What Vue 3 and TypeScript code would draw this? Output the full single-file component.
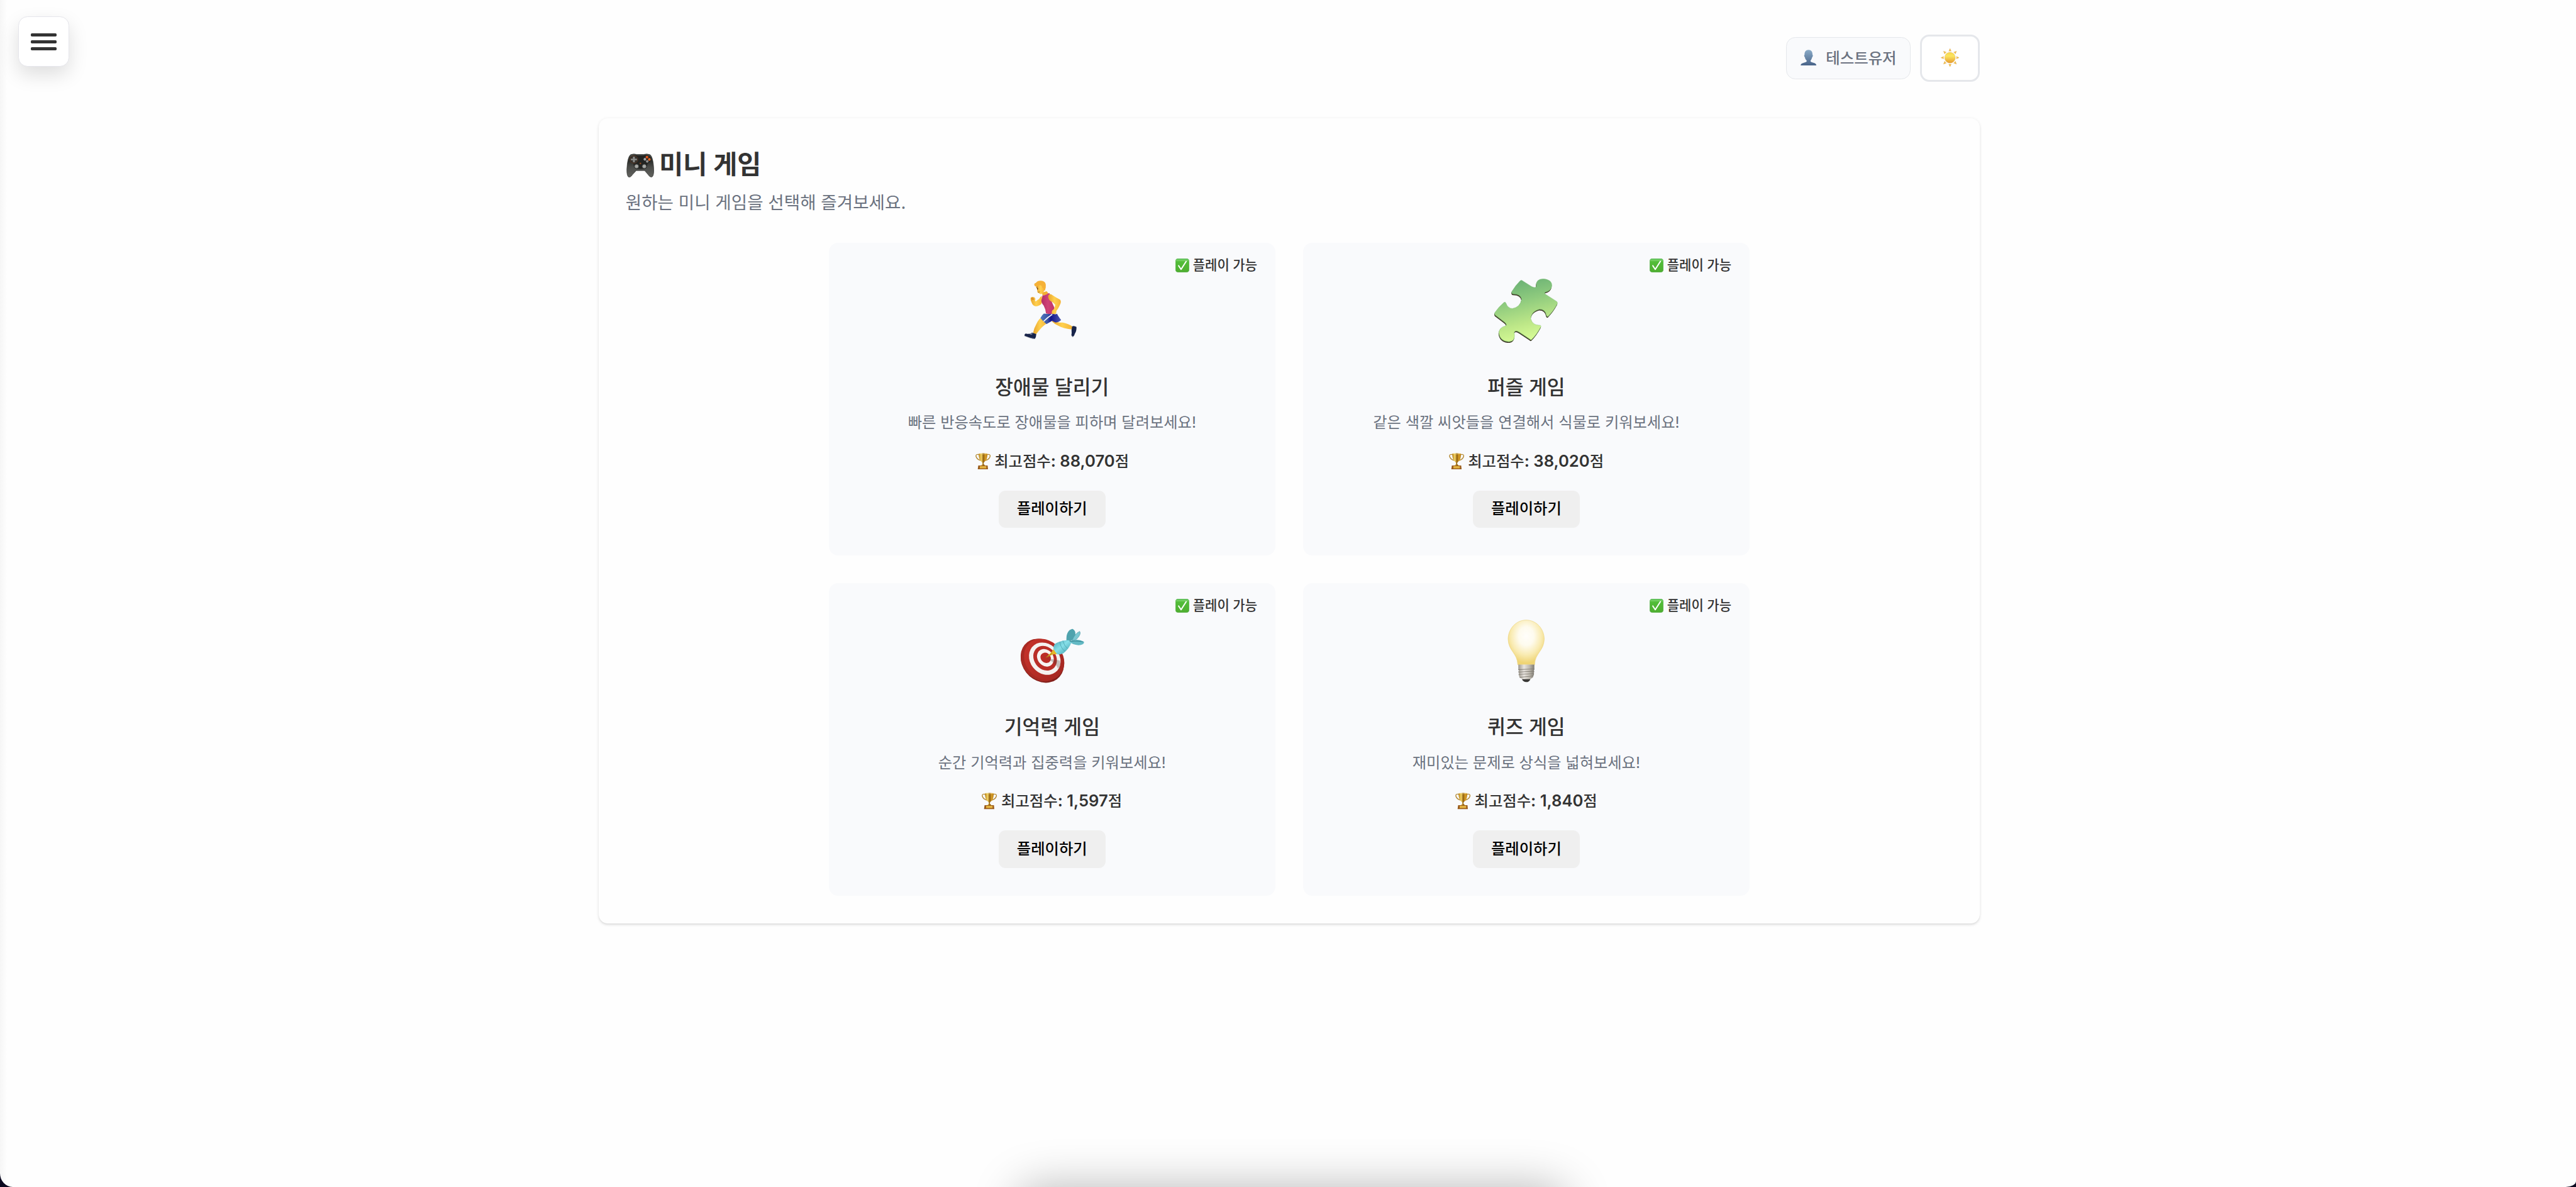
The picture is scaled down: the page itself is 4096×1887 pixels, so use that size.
<script setup lang="ts">
type IconName = 'runner' | 'puzzle' | 'target' | 'bulb'

interface Game {
  icon: IconName
  title: string
  description: string
  best: number
}

const games: Game[] = [
  { icon: 'runner', title: '장애물 달리기', description: '빠른 반응속도로 장애물을 피하며 달려보세요!', best: 88070 },
  { icon: 'puzzle', title: '퍼즐 게임', description: '같은 색깔 씨앗들을 연결해서 식물로 키워보세요!', best: 38020 },
  { icon: 'target', title: '기억력 게임', description: '순간 기억력과 집중력을 키워보세요!', best: 1597 },
  { icon: 'bulb', title: '퀴즈 게임', description: '재미있는 문제로 상식을 넓혀보세요!', best: 1840 },
]

const rays = [0, 45, 90, 135, 180, 225, 270, 315]

const formatScore = (value: number): string => value.toLocaleString('en-US')
</script>

<template>
  <div class="window">
    <div class="page">
      <button class="menu" aria-label="menu">
        <span class="bar"></span>
        <span class="bar"></span>
        <span class="bar"></span>
      </button>

      <header class="header">
        <div class="user">
          <svg class="user-icon" viewBox="267 167 85 86">
            <defs>
              <linearGradient id="person" x1="0" y1="0" x2="0" y2="1">
                <stop offset="0" stop-color="#8aabc8" />
                <stop offset="1" stop-color="#486388" />
              </linearGradient>
            </defs>
            <path fill="url(#person)" d="M309 168C325 168 331 180 330 194Q334 196 331 203Q330 207 328 208C326 217 322 222 320 225V230Q322 234 335 237Q351 241 351 252H267Q267 241 284 237Q297 234 299 230V225C295 221 291 216 290 208Q288 207 287 203Q284 196 288 194C287 180 294 168 309 168Z" />
          </svg>
          <span>테스트유저</span>
        </div>
        <button class="theme" aria-label="theme">
          <svg class="sun" viewBox="-48 -48 96 96">
            <defs>
              <linearGradient id="sun" x1="0" y1="0" x2="0" y2="1">
                <stop offset="0" stop-color="#f7d64a" />
                <stop offset=".35" stop-color="#fbe560" />
                <stop offset="1" stop-color="#e69a2e" />
              </linearGradient>
            </defs>
            <circle r="28" fill="url(#sun)" stroke="#dca045" stroke-width="1" />
            <path v-for="a in rays" :key="a" d="M0 -48L6.5 -33Q0 -36 -6.5 -33Z" fill="#f4bc38" stroke="#d9b27c" stroke-width="1.4" :transform="`rotate(${a})`" />
          </svg>
        </button>
      </header>

      <main class="panel">
        <h1 class="heading">
          <svg class="gamepad" viewBox="166 229 118 125" preserveAspectRatio="none">
            <defs>
              <linearGradient id="pad" x1="0" y1="0" x2="0" y2="1">
                <stop offset="0" stop-color="#4d514d" />
                <stop offset=".3" stop-color="#2b2d2a" />
                <stop offset=".55" stop-color="#4a4b48" />
                <stop offset="1" stop-color="#62635f" />
              </linearGradient>
            </defs>
            <path fill="url(#pad)" stroke="#30312f" stroke-width="2" d="M184 235Q198 229 210 234H240Q253 229 267 235Q280 246 283 310Q284 350 273 352Q265 352 258 338L244 318H208L193 338Q185 352 178 353Q167 350 168 310Q171 246 184 235Z" />
            <path fill="#232422" d="M180 250Q198 232 215 240H237Q255 232 271 250Q272 274 256 282Q254 306 244 309H208Q198 306 196 282Q180 274 180 250Z" />
            <ellipse cx="198" cy="260" rx="17" ry="20" fill="#33302c" stroke="#6b3c20" stroke-width="2" />
            <path d="M194 245h8v11h9v8h-9v11h-8v-11h-9v-8h9z" fill="#8b8c8a" />
            <ellipse cx="254" cy="248" rx="6" ry="7" fill="#e0561c" />
            <ellipse cx="264" cy="260" rx="5.5" ry="7" fill="#f06a24" />
            <ellipse cx="245" cy="259" rx="5.5" ry="7" fill="#a5a5a8" />
            <ellipse cx="255" cy="270" rx="5.5" ry="7" fill="#909090" />
            <ellipse cx="226" cy="281" rx="3.5" ry="4.5" fill="#8e4b22" />
            <ellipse cx="209.500" cy="296" rx="10" ry="12" fill="#8f908d" stroke="#1d1e1c" stroke-width="2.500" />
            <ellipse cx="242.500" cy="296" rx="10" ry="12" fill="#8f908d" stroke="#1d1e1c" stroke-width="2.500" />
            <ellipse cx="209.500" cy="296" rx="5.500" ry="7" fill="#a9aaa7" />
            <ellipse cx="242.500" cy="296" rx="5.500" ry="7" fill="#a9aaa7" />
          </svg>
          <span class="heading-text">미니 게임</span>
        </h1>
        <p class="subtitle">원하는 미니 게임을 선택해 즐겨보세요.</p>

        <section class="grid">
          <article v-for="game in games" :key="game.title" class="card">
            <div class="status">
              <svg class="check" viewBox="0 0 24 24">
                <defs>
                  <linearGradient id="check" x1="0" y1="0" x2="0" y2="1">
                    <stop offset="0" stop-color="#4cc04a" />
                    <stop offset=".12" stop-color="#7ad166" />
                    <stop offset=".22" stop-color="#52bd38" />
                    <stop offset="1" stop-color="#4fae30" />
                  </linearGradient>
                </defs>
                <rect x=".3" y=".3" width="23.4" height="23.4" rx="4.5" fill="url(#check)" stroke="#3f9f36" stroke-width=".6" />
                <path d="M5.600 12.500L9.800 18.800L18.700 5" fill="none" stroke="#fff" stroke-width="2.200" stroke-linecap="round" stroke-linejoin="round" />
              </svg>
              <span>플레이 가능</span>
            </div>

            <div class="icon">
              <svg v-if="game.icon === 'runner'" class="runner" viewBox="90 54 272 306">
                <defs>
                  <linearGradient id="skin" x1="0" y1="0" x2="1" y2="0">
                    <stop offset="0" stop-color="#e9a52c" />
                    <stop offset=".5" stop-color="#ffd04f" />
                    <stop offset="1" stop-color="#f5b437" />
                  </linearGradient>
                  <linearGradient id="shirt" x1="0" y1="0" x2="1" y2="0">
                    <stop offset="0" stop-color="#b32e66" />
                    <stop offset=".5" stop-color="#cf4277" />
                    <stop offset="1" stop-color="#c03468" />
                  </linearGradient>
                  <linearGradient id="shorts" x1="0" y1="0" x2="1" y2="0">
                    <stop offset="0" stop-color="#5079bd" />
                    <stop offset=".35" stop-color="#3c55a5" />
                    <stop offset=".5" stop-color="#15158a" />
                    <stop offset="1" stop-color="#4a57b0" />
                  </linearGradient>
                </defs>
                <path fill="url(#skin)" d="M180 134Q184 160 178 176Q160 190 146 188Q132 184 127 168Q120 156 122 144Q128 136 141 141Q150 148 145 158L148 163Q160 154 166 150Q172 138 180 134Z" />
                <path fill="#d9922a" d="M124 146Q130 140 137 145L141 152Q134 158 128 153Z" />
                <path fill="url(#skin)" d="M240 262Q260 274 290 273Q322 280 341 294L336 309Q290 303 266 289Q246 280 232 266Z" />
                <path fill="url(#skin)" d="M173 250L207 277Q190 288 180 298Q164 316 150 334L135 327Q140 300 152 280Q160 262 173 250Z" />
                <path fill="#f1b034" d="M181 116L206 110L214 120Q202 132 184 131Z" />
                <path fill="url(#skin)" d="M152 84Q160 66 180 66Q196 70 195 92Q194 112 182 122Q172 128 164 119Q156 117 157 108Q154 102 156 98Q150 94 152 84Z" />
                <path fill="#f5b138" d="M141 76Q140 68 149 66Q158 54 176 55Q198 56 201 75Q203 90 196 108Q190 104 188 93Q182 96 181 84Q178 76 168 79Q152 90 144 83Z" />
                <path d="M151 90l8 -2M161 114q6 3 9 -3" stroke="#7b4a18" stroke-width="2.500" fill="none" />
                <ellipse cx="158" cy="97" rx="2.500" ry="4.500" fill="#513017" />
                <path fill="url(#shirt)" d="M184 131Q200 131 213 120L221 120Q226 132 224 142Q232 168 246 196Q244 216 238 227Q218 230 202 225Q200 202 190 184Q178 172 178 158Q182 144 184 131Z" />
                <path fill="url(#skin)" d="M214 132Q222 120 236 130Q254 142 276 154Q283 164 276 178Q266 202 256 212Q258 226 248 230Q238 236 232 227Q230 214 236 208Q246 206 250 180Q238 166 222 158Q212 148 214 132Z" />
                <path fill="url(#shorts)" d="M191 226Q215 230 238 228Q252 232 260 227Q264 238 281 260Q270 272 252 273Q240 268 234 264Q220 272 205 281Q186 266 173 249Q180 234 191 226Z" />
                <path d="M235 230Q212 244 190 267" stroke="#f3f6fb" stroke-width="6" fill="none" />
                <path fill="#18244a" d="M97 330Q116 336 129 325L151 333Q152 350 143 359Q124 356 91 343Q88 332 97 330Z" />
                <path fill="#18244a" d="M338 293Q348 288 361 296Q362 318 352 332Q348 346 341 348Q332 344 336 328Q334 312 338 293Z" />
                <path d="M92 344Q120 355 143 358M335 342Q340 347 344 345" stroke="#d9d3cf" stroke-width="2" fill="none" />
                <path d="M118 332l10 3M123 328l9 4" stroke="#cfd4e2" stroke-width="2.500" />
              </svg>

              <svg v-else-if="game.icon === 'puzzle'" class="puzzle" viewBox="682 204 212 309" preserveAspectRatio="none">
                <defs>
                  <linearGradient id="piece" x1=".35" y1="0" x2=".6" y2="1">
                    <stop offset="0" stop-color="#68b074" />
                    <stop offset=".35" stop-color="#8fcb7e" />
                    <stop offset=".7" stop-color="#bde788" />
                    <stop offset="1" stop-color="#dcff98" />
                  </linearGradient>
                  <path id="piece-shape" d="M768 214Q772 209 777 215L806 242Q818 250 822 242Q818 206 844 205Q874 208 873 238Q871 262 852 268Q846 272 852 279L889 313Q893 318 891 325Q878 360 861 384Q857 388 855 380Q852 350 832 350Q805 360 803 395Q808 426 830 427Q838 426 837 434Q823 472 806 496Q803 499 799 493L765 460Q751 448 748 462Q754 504 731 506Q700 504 697 462Q700 436 720 430Q726 424 716 412L685 378Q682 372 684 366Q696 340 714 318Q719 313 721 322Q727 346 742 347Q768 341 773 303Q770 276 745 277Q739 276 740 266Q752 237 768 214Z" />
                </defs>
                <use href="#piece-shape" fill="#3b2a1f" transform="translate(-1 6)" />
                <use href="#piece-shape" fill="#4d6b3c" transform="translate(-.500 3)" />
                <use href="#piece-shape" fill="url(#piece)" stroke="#7dbd76" stroke-width="1" />
              </svg>

              <svg v-else-if="game.icon === 'target'" class="target" viewBox="674 231 214 240" preserveAspectRatio="none">
                <defs>
                  <linearGradient id="dart" x1="0" y1="0" x2="1" y2="1">
                    <stop offset="0" stop-color="#4aa7b5" />
                    <stop offset=".45" stop-color="#86dfe8" />
                    <stop offset="1" stop-color="#3b98a6" />
                  </linearGradient>
                  <linearGradient id="board" x1="0" y1="0" x2="1" y2="1">
                    <stop offset="0" stop-color="#c9332b" />
                    <stop offset="1" stop-color="#a02620" />
                  </linearGradient>
                </defs>
                <ellipse cx="748" cy="373" rx="70" ry="98" fill="#84201b" transform="rotate(-14 748 373)" />
                <ellipse cx="744" cy="370" rx="66" ry="95" fill="#a92a23" transform="rotate(-14 744 370)" />
                <ellipse cx="754" cy="367" rx="65" ry="92" fill="url(#board)" transform="rotate(-14 754 367)" />
                <ellipse cx="756" cy="364" rx="51" ry="72" fill="#f5f2f0" transform="rotate(-14 756 364)" />
                <ellipse cx="757" cy="362" rx="38" ry="55" fill="#b92e27" transform="rotate(-14 757 362)" />
                <ellipse cx="758" cy="360" rx="27" ry="39" fill="#f7f4f2" transform="rotate(-14 758 360)" />
                <ellipse cx="759" cy="360" rx="17" ry="23" fill="#bb2d27" transform="rotate(-14 759 360)" />
                <path d="M762 362L806 372Q812 392 800 408Q796 386 762 362Z" fill="#5a3a38" opacity=".3" />
                <path d="M759 360L779 334L785 322L797 344L784 345Z" fill="#e3b92c" />
                <path d="M759 361L781 340" stroke="#8a6a12" stroke-width="2" />
                <path d="M828 284Q826 240 848 233Q860 240 857 262Q854 278 842 286Z" fill="#4fa3ae" />
                <path d="M846 286Q856 252 872 244Q878 256 862 278Z" fill="#7cc8d2" stroke="#4a97a3" stroke-width="1.500" />
                <path d="M838 290Q862 272 886 290Q888 302 868 305Q848 303 838 290Z" fill="#63b9c4" />
                <path d="M785 322Q782 300 800 292Q818 282 834 283L844 293Q838 318 818 340Q804 348 797 344Z" fill="url(#dart)" />
                <path d="M806 289Q808 318 824 332M816 285Q820 308 832 320" stroke="#4aa5b2" stroke-width="2" fill="none" />
                <path d="M838 288Q860 284 884 290" stroke="#2f7f8c" stroke-width="2.500" fill="none" />
              </svg>

              <svg v-else class="bulb" viewBox="726 194 124 275" preserveAspectRatio="none">
                <defs>
                  <radialGradient id="glass" cx=".5" cy=".36" r=".6">
                    <stop offset="0" stop-color="#fffefb" />
                    <stop offset=".35" stop-color="#fefbee" />
                    <stop offset=".7" stop-color="#f9ebb2" />
                    <stop offset="1" stop-color="#efd474" />
                  </radialGradient>
                  <linearGradient id="screw" x1="0" y1="0" x2="1" y2="0">
                    <stop offset="0" stop-color="#9c978d" />
                    <stop offset=".35" stop-color="#e9e5df" />
                    <stop offset=".7" stop-color="#bdb8ae" />
                    <stop offset="1" stop-color="#7e7a72" />
                  </linearGradient>
                </defs>
                <path fill="url(#glass)" stroke="#ecd27a" stroke-width="1.500" d="M788 196C822 196 848 235 848 280C846 334 817 340 816 392H760C759 340 730 334 728 280C728 235 754 196 788 196Z" />
                <path fill="url(#screw)" d="M762 391H815V414L813 418L815 422L813 428L814 434L810 448L800 456H776L766 448L763 434L764 428L762 422L764 418L762 414Z" />
                <path d="M762 413L815 410M762 424L814 420M763 435L814 430M766 447L811 441" stroke="#817c73" stroke-width="2.500" />
                <path fill="#3a3836" d="M774 455H802Q798 468 788 468Q778 467 774 455Z" />
              </svg>
            </div>

            <h2 class="title">{{ game.title }}</h2>
            <p class="description">{{ game.description }}</p>
            <div class="score">
              <svg class="trophy" viewBox="75 46 80 87">
                <defs>
                  <linearGradient id="gold" x1="0" y1="0" x2="1" y2="0">
                    <stop offset="0" stop-color="#b27a13" />
                    <stop offset=".3" stop-color="#f6d767" />
                    <stop offset=".55" stop-color="#8d5c0d" />
                    <stop offset=".75" stop-color="#d79d26" />
                    <stop offset="1" stop-color="#b87f18" />
                  </linearGradient>
                </defs>
                <path d="M95 55Q76 50 78 64Q82 80 104 86M135 55Q154 50 152 64Q148 80 126 86" fill="none" stroke="#b58a35" stroke-width="4.500" />
                <path fill="url(#gold)" d="M92 49Q115 46 138 49Q138 84 122 93Q117 97 118 104Q124 108 126 113H104Q106 108 112 104Q113 97 108 93Q92 84 92 49Z" />
                <path fill="#9a5b1c" d="M90 112H139L141 132H87Z" />
                <path fill="#e3b340" d="M98 115H132V127H98Z" />
                <path d="M92 50Q115 54 138 50" stroke="#f3d98a" stroke-width="2" fill="none" />
              </svg>
              <span>최고점수<span class="num">: {{ formatScore(game.best) }}</span>점</span>
            </div>
            <button class="play">플레이하기</button>
          </article>
        </section>
      </main>

      <div class="dock-shadow"></div>
    </div>
  </div>
</template>

<style>
html {
  font-size: 9.151px;
}

body {
  margin: 0;
  overflow: hidden;
}
</style>

<style scoped>
.window {
  height: 1887px;
  background: #0c0920;
  font-family: Inter, 'Noto Sans CJK KR', sans-serif;
  color: #333;
}

.page {
  position: relative;
  box-sizing: border-box;
  height: 100%;
  padding: 6rem 0 0 0.4rem;
  overflow: hidden;
  background: linear-gradient(90deg, #f6f6f6, #fefefe 1.2rem) #fefefe;
  border-radius: 0 0 1.8rem 2.2rem / 0 0 1rem 2.4rem;
}

.menu {
  position: absolute;
  left: 3.2rem;
  top: 2.8rem;
  display: flex;
  flex-direction: column;
  align-items: center;
  justify-content: center;
  gap: 0.7rem;
  box-sizing: border-box;
  width: 8.8rem;
  height: 8.8rem;
  padding: 0.15rem 0 0;
  border: 0.2rem solid #e5e5eb;
  border-radius: 1.6rem;
  background: #fff;
  box-shadow: 0 1.4rem 3.4rem rgba(0, 0, 0, 0.13);
}

.bar {
  width: 4.4rem;
  height: 0.5rem;
  border-radius: 0.2rem;
  background: #333;
}

.header {
  display: flex;
  align-items: center;
  justify-content: flex-end;
  gap: 1.6rem;
  width: 240rem;
  height: 8.2rem;
  margin: 0 auto;
}

.user {
  display: flex;
  align-items: center;
  gap: 1.65rem;
  box-sizing: border-box;
  width: 21.7rem;
  height: 7.3rem;
  padding: 0 0 0 2.4rem;
  border: 0.2rem solid #e5e7eb;
  border-radius: 1.6rem;
  background: #f9fafc;
  color: #6b7280;
  font-size: 2.67rem;
  font-weight: 500;
  line-height: 4rem;
  white-space: nowrap;
}

.user-icon {
  width: 2.8rem;
  height: 2.8rem;
  margin-bottom: 0.2rem;
}

.theme {
  display: flex;
  align-items: center;
  justify-content: center;
  box-sizing: border-box;
  width: 10.4rem;
  height: 8.2rem;
  padding: 0 0 0.2rem;
  border: 0.4rem solid #e5e7eb;
  border-radius: 1.6rem;
  background: #fff;
}

.sun {
  width: 3.2rem;
  height: 3.2rem;
}

.panel {
  box-sizing: border-box;
  width: 240rem;
  height: 139.8rem;
  margin: 6.4rem auto 0;
  padding: 4.8rem;
  border-radius: 1.6rem;
  background: #fefefe;
  box-shadow: 0 0.2rem 0.6rem rgba(0, 0, 0, 0.1), 0 0.3rem 0.3rem -0.1rem rgba(0, 0, 0, 0.05);
}

.heading {
  display: flex;
  align-items: center;
  gap: 0.95rem;
  height: 6.1rem;
  margin: 0;
  font-size: 4.52rem;
  font-weight: 700;
  line-height: 6.1rem;
}

.heading-text {
  padding-top: 0.3rem;
}

.gamepad {
  width: 4.8rem;
  height: 4.17rem;
  margin-top: 0.6rem;
}

.subtitle {
  margin: 1.75rem 0 4.95rem -0.1rem;
  color: #6b7280;
  font-size: 3.02rem;
  line-height: 4rem;
}

.grid {
  display: grid;
  grid-template-columns: repeat(2, 77.6rem);
  grid-auto-rows: 54.3rem;
  gap: 4.8rem;
  justify-content: center;
}

.card {
  position: relative;
  display: flex;
  flex-direction: column;
  align-items: center;
  box-sizing: border-box;
  padding-top: 4.8rem;
  border-radius: 1.6rem;
  background: #f9fafc;
  white-space: nowrap;
}

.status {
  position: absolute;
  top: 2.4rem;
  right: 3.15rem;
  display: flex;
  align-items: center;
  gap: 0.6rem;
  font-size: 2.3rem;
  font-weight: 500;
  line-height: 3rem;
}

.check {
  width: 2.4rem;
  height: 2.4rem;
}

.icon {
  display: flex;
  align-items: center;
  justify-content: center;
  height: 13.8rem;
}

.runner {
  width: 9.07rem;
  height: 10.2rem;
  margin: 0 0.5rem 0.2rem 0;
}

.puzzle {
  width: 11.1rem;
  height: 11.2rem;
  margin-top: 0.2rem;
}

.target {
  width: 11.2rem;
  height: 9.5rem;
  margin-top: 1.8rem;
}

.bulb {
  width: 6.5rem;
  height: 10.9rem;
  margin-top: 0.2rem;
}

.title {
  margin: 4.3rem 0 0;
  font-size: 3.42rem;
  font-weight: 500;
  line-height: 4.4rem;
}

.description {
  margin: 2rem 0 0;
  color: #6b7280;
  font-size: 2.65rem;
  line-height: 4rem;
}

.score {
  display: flex;
  align-items: center;
  gap: 0.7rem;
  margin-top: 2.6rem;
  font-size: 2.66rem;
  font-weight: 500;
  line-height: 4rem;
}

.trophy {
  width: 2.65rem;
  height: 2.9rem;
}

.num {
  font-size: 2.8rem;
  font-weight: 600;
}

.play {
  box-sizing: border-box;
  width: 18.6rem;
  height: 6.5rem;
  margin-top: 3.1rem;
  padding: 0 0 0.25rem;
  border: 0;
  border-radius: 1.2rem;
  background: #efefef;
  color: #000;
  font-family: inherit;
  font-size: 2.66rem;
  font-weight: 500;
  line-height: 4rem;
}

.dock-shadow {
  position: absolute;
  left: 177rem;
  top: 206.2rem;
  width: 95rem;
  height: 20rem;
  border-radius: 3rem;
  box-shadow: 0 0 8rem rgba(0, 0, 0, 0.28);
}
</style>
